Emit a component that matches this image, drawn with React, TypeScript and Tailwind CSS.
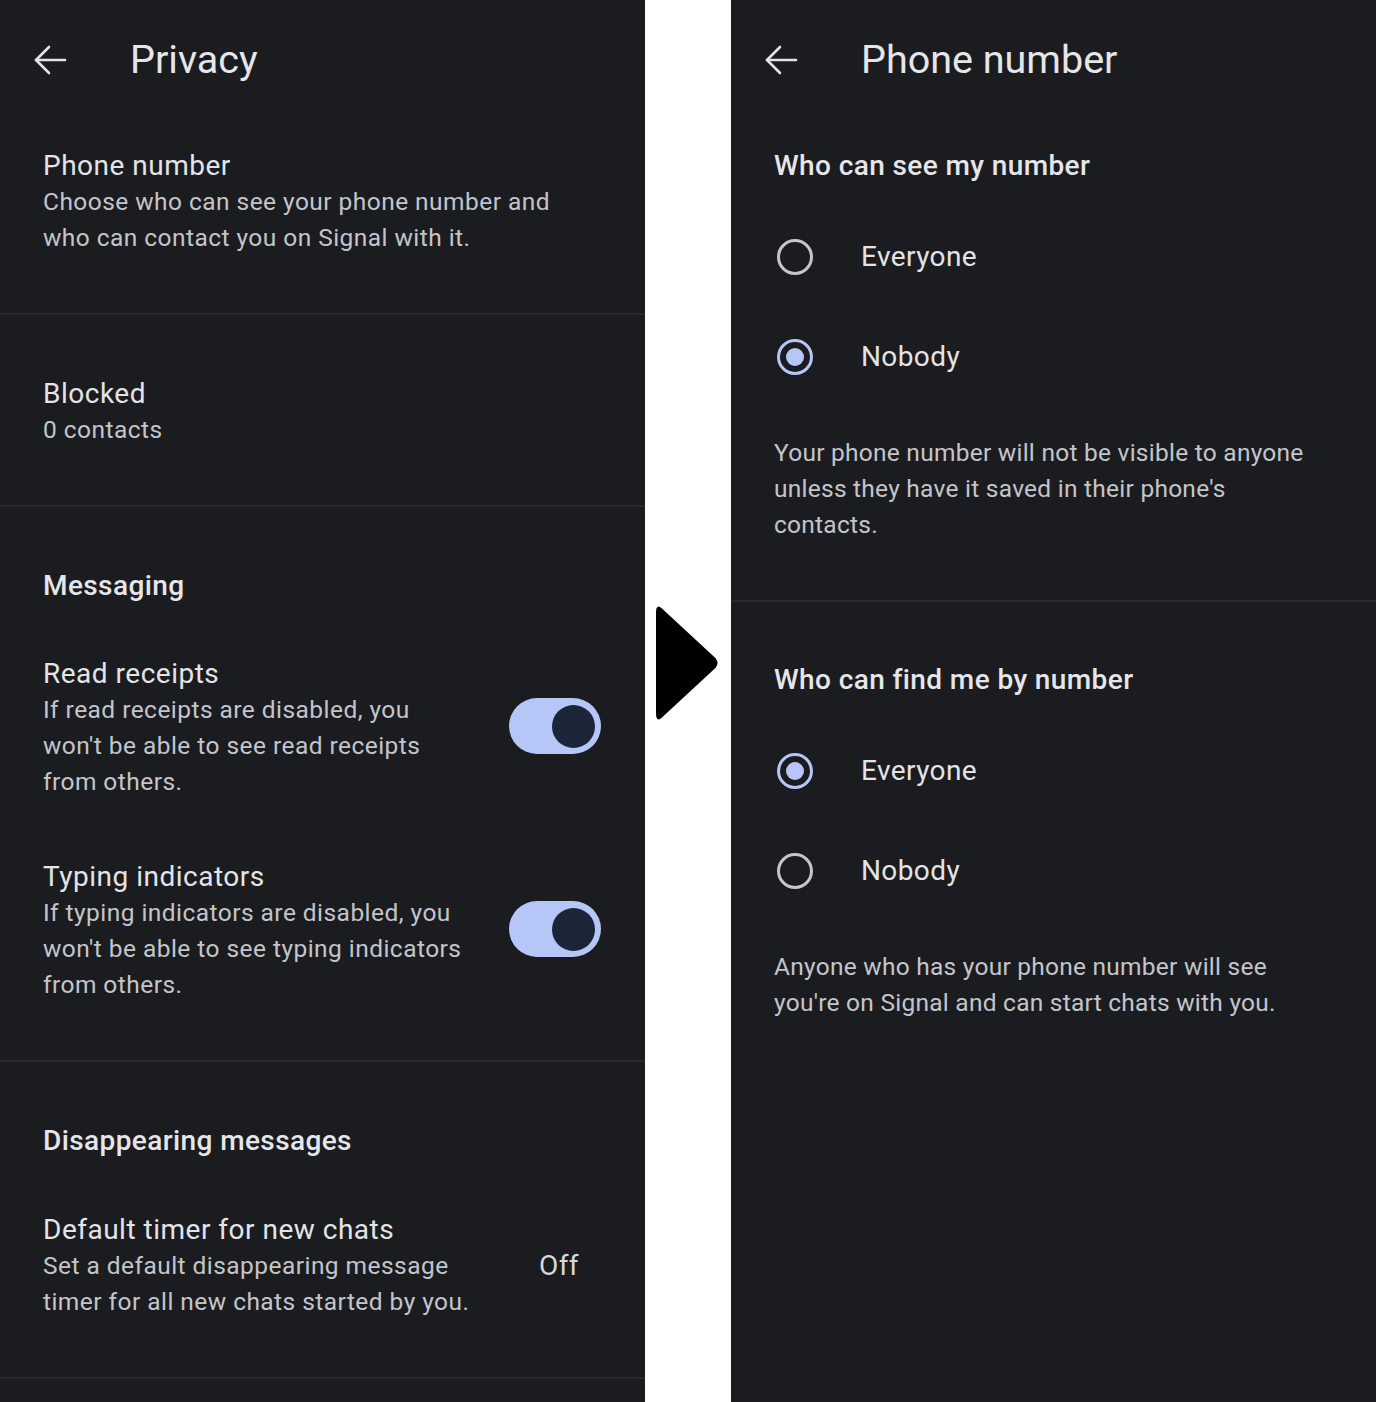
import React from "react";

// Shared bits for the two settings screens.
function BackArrow() {
  return (
    <svg width="34" height="32" viewBox="0 0 34 32" fill="none" className="shrink-0">
      <path d="M32 16H3" stroke="#e4e4e7" strokeWidth="2.6" strokeLinecap="round" />
      <path d="M16 3L3 16L16 29" stroke="#e4e4e7" strokeWidth="2.6" strokeLinecap="round" strokeLinejoin="round" />
    </svg>
  );
}

function Header({ title }: { title: string }) {
  return (
    <div className="relative flex h-[120px] items-center">
      <div className="w-[130px] pl-[33px]">
        <BackArrow />
      </div>
      <span className="text-[39.5px] leading-[44px] text-[#e6e6e9]">{title}</span>
    </div>
  );
}

function Divider() {
  return <div className="h-[2px] w-full bg-[#28292c]" />;
}

function Toggle() {
  return (
    <div className="flex h-[56px] w-[92px] shrink-0 items-center justify-end rounded-full bg-[#b6c6f6] pr-[6px]">
      <div className="h-[43px] w-[43px] rounded-full bg-[#1c2437]" />
    </div>
  );
}

function Radio({ checked }: { checked: boolean }) {
  return checked ? (
    <div className="flex h-[36px] w-[36px] items-center justify-center rounded-full border-[3px] border-[#b6c6f8]">
      <div className="h-[18px] w-[18px] rounded-full bg-[#b6c6f8]" />
    </div>
  ) : (
    <div className="h-[36px] w-[36px] rounded-full border-[3px] border-[#c5c6c9]" />
  );
}

function Title({ children }: { children: React.ReactNode }) {
  return <div className="text-[28px] leading-[36px] tracking-[0.5px] text-[#e4e4e7]">{children}</div>;
}

function Summary({ children }: { children: React.ReactNode }) {
  return <div className="text-[24.5px] leading-[36px] tracking-[0.45px] text-[#c3c5cb]">{children}</div>;
}

// right-hand screen renders its footnotes a touch tighter
function Note({ children }: { children: React.ReactNode }) {
  return <div className="text-[24.5px] leading-[36px] tracking-[0.25px] text-[#c3c5cb]">{children}</div>;
}

function SectionLabel({ children }: { children: React.ReactNode }) {
  return <div className="text-[28px] font-medium leading-[36px] tracking-[0.4px] text-[#e6e6ea]">{children}</div>;
}

function RadioRow({ label, checked }: { label: string; checked: boolean }) {
  return (
    <div className="flex h-[100px] items-center">
      <div className="flex w-[130px] justify-start pl-[46px]">
        <Radio checked={checked} />
      </div>
      <span className="text-[28px] leading-[36px] tracking-[0.4px] text-[#e4e4e7]">{label}</span>
    </div>
  );
}

function PrivacyScreen() {
  return (
    <div className="h-full w-[645px] shrink-0 bg-[#1b1c1f]">
      <Header title="Privacy" />

      <div className="px-[43px] pb-[57px] pt-[28px]">
        <Title>Phone number</Title>
        <Summary>
          Choose who can see your phone number and
          <br />
          who can contact you on Signal with it.
        </Summary>
      </div>
      <Divider />

      <div className="px-[43px] pb-[57px] pt-[61px]">
        <Title>Blocked</Title>
        <Summary>0 contacts</Summary>
      </div>
      <Divider />

      <div className="px-[43px] pt-[61px]">
        <SectionLabel>Messaging</SectionLabel>
      </div>

      <div className="flex items-center gap-[24px] pl-[43px] pr-[44px] pt-[52px]">
        <div className="flex-1">
          <Title>Read receipts</Title>
          <Summary>
            If read receipts are disabled, you
            <br />
            won't be able to see read receipts
            <br />
            from others.
          </Summary>
        </div>
        <div className="mb-[4px]">
          <Toggle />
        </div>
      </div>

      <div className="flex items-center gap-[24px] pl-[43px] pr-[44px] pb-[57px] pt-[59px]">
        <div className="flex-1">
          <Title>Typing indicators</Title>
          <Summary>
            If typing indicators are disabled, you
            <br />
            won't be able to see typing indicators
            <br />
            from others.
          </Summary>
        </div>
        <div className="mb-[4px]">
          <Toggle />
        </div>
      </div>
      <Divider />

      <div className="px-[43px] pt-[61px]">
        <SectionLabel>Disappearing messages</SectionLabel>
      </div>

      <div className="flex items-center pl-[43px] pr-[66px] pb-[57px] pt-[53px]">
        <div className="flex-1">
          <Title>Default timer for new chats</Title>
          <Summary>
            Set a default disappearing message
            <br />
            timer for all new chats started by you.
          </Summary>
        </div>
        <span className="text-[28px] leading-[36px] tracking-[0.4px] text-[#d6d7db]">Off</span>
      </div>
      <Divider />
    </div>
  );
}

function PhoneNumberScreen() {
  return (
    <div className="h-full flex-1 bg-[#1b1c1f]">
      <Header title="Phone number" />

      <div className="px-[43px] pt-[28px]">
        <SectionLabel>Who can see my number</SectionLabel>
      </div>
      <div className="pt-[23px]">
        <RadioRow label="Everyone" checked={false} />
        <RadioRow label="Nobody" checked={true} />
      </div>
      <div className="px-[43px] pb-[57px] pt-[28px]">
        <Note>
          Your phone number will not be visible to anyone
          <br />
          unless they have it saved in their phone's
          <br />
          contacts.
        </Note>
      </div>
      <Divider />

      <div className="px-[43px] pt-[60px]">
        <SectionLabel>Who can find me by number</SectionLabel>
      </div>
      <div className="pt-[23px]">
        <RadioRow label="Everyone" checked={true} />
        <RadioRow label="Nobody" checked={false} />
      </div>
      <div className="px-[43px] pt-[28px]">
        <Note>
          Anyone who has your phone number will see
          <br />
          you're on Signal and can start chats with you.
        </Note>
      </div>
    </div>
  );
}

export default function App() {
  return (
    <div
      className="flex h-[1402px] w-[1376px] overflow-hidden bg-white"
      style={{ fontFamily: "Roboto, 'Noto Sans', sans-serif" }}
    >
      <PrivacyScreen />
      <div className="flex w-[86px] shrink-0 items-center justify-start bg-white pl-[10px]">
        <svg width="64" height="118" viewBox="0 0 64 118" className="mt-[-76px]">
          <path
            d="M6 5 Q2 1 2 8 V110 Q2 117 6 113 L60 63 Q63 59 60 55 Z"
            fill="#000"
            stroke="#000"
            strokeWidth="2"
            strokeLinejoin="round"
          />
        </svg>
      </div>
      <PhoneNumberScreen />
    </div>
  );
}
